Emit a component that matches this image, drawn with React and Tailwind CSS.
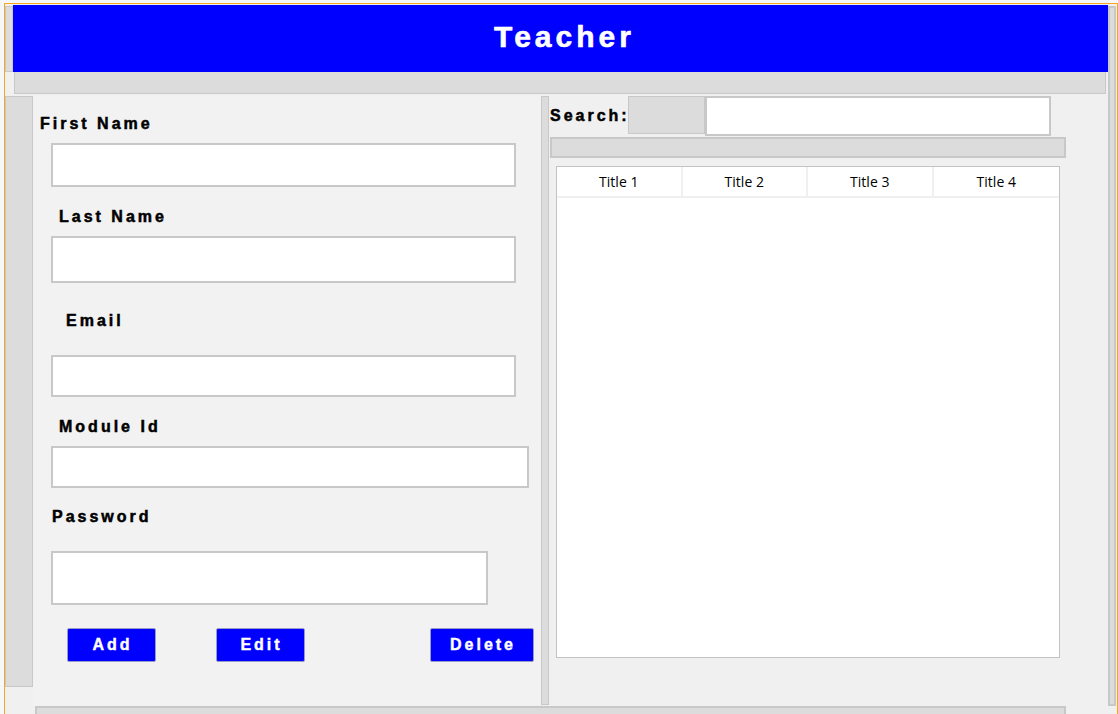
const label = "font-['Liberation_Sans',Arial,sans-serif] text-[16px] font-bold leading-[18px] tracking-[3px] text-black [-webkit-text-stroke:0.5px_black]";
const field = 'border-2 border-[#c8c8c8] bg-white';
const panel = 'border border-[#c8c8c8] bg-[#dcdcdc]';

function FormLabel({ children, className }) {
  return <div className={`${label} ${className}`}>{children}</div>;
}

function ActionButton({ children, className }) {
  return (
    <button
      className={`h-[34px] rounded-[2px] border border-[#9a9ac8] bg-[#0000ff] font-['Liberation_Sans',Arial,sans-serif] text-[16px] font-bold tracking-[3px] text-white [-webkit-text-stroke:0.4px_white] ${className}`}
    >
      {children}
    </button>
  );
}

export default function App() {
  return (
    <div className="h-[714px] w-[1118px] overflow-hidden bg-[#f7f7f7] pl-[4px] pt-[3px]">
      <div className="flex h-[711px] w-[1114px] overflow-hidden border-l border-r border-t border-[#f5a623] bg-[#f0f0f0] pt-[1px]">
        <div className="flex w-[1103px] shrink-0 flex-col">
          {/* header */}
          <div className="flex h-[67px] shrink-0">
            <div className={`mt-[1px] h-[66px] w-[8px] ${panel}`} />
            <div className="flex flex-1 items-center justify-center bg-[#0000ff] pb-[5px] pl-[8px] font-['Liberation_Sans',Arial,sans-serif] text-[30px] font-bold tracking-[4px] text-white [-webkit-text-stroke:0.6px_white]">
              Teacher
            </div>
          </div>
          <div className={`ml-[9px] h-[22px] w-[1092px] shrink-0 border-t-0 ${panel}`} />

          <div className="mt-[2px] flex h-[609px] shrink-0">
            <div className={`h-[591px] w-[28px] ${panel}`} />

            {/* form */}
            <div className="flex w-[508px] flex-col bg-[#f2f2f2]">
              <FormLabel className="ml-[7px] mt-[19px]">First Name</FormLabel>
              <div className={`ml-[18px] mt-[10px] h-[44px] w-[465px] ${field}`} />
              <FormLabel className="ml-[26px] mt-[21px]">Last Name</FormLabel>
              <div className={`ml-[18px] mt-[10px] h-[47px] w-[465px] ${field}`} />
              <FormLabel className="ml-[33px] mt-[29px]">Email</FormLabel>
              <div className={`ml-[18px] mt-[25px] h-[42px] w-[465px] ${field}`} />
              <FormLabel className="ml-[26px] mt-[21px]">Module Id</FormLabel>
              <div className={`ml-[18px] mt-[10px] h-[42px] w-[478px] ${field}`} />
              <FormLabel className="ml-[19px] mt-[20px]">Password</FormLabel>
              <div className={`ml-[18px] mt-[25px] h-[54px] w-[437px] ${field}`} />
              <div className="ml-[34px] mt-[23px] flex">
                <ActionButton className="w-[89px] pl-[2px]">Add</ActionButton>
                <ActionButton className="ml-[60px] w-[89px] pl-[2px]">Edit</ActionButton>
                <ActionButton className="ml-[125px] w-[104px] pl-[2px]">Delete</ActionButton>
              </div>
            </div>

            <div className={`h-[609px] w-[8px] ${panel}`} />

            {/* list */}
            <div className="flex flex-1 flex-col">
              <div className="flex">
                <div className="flex h-[38px] w-[79px] items-center pt-[2px]">
                  <span className={label + ' pl-[1px]'}>Search:</span>
                </div>
                <div className={`h-[38px] w-[77px] ${panel}`} />
                <div className={`h-[40px] w-[346px] ${field}`} />
              </div>
              <div className={`ml-[1px] mt-[1px] h-[21px] w-[516px] border-2 ${panel}`} />
              <div className="ml-[7px] mt-[8px] h-[492px] w-[504px] border border-[#c3c3c3] bg-white">
                <div className="grid h-[31px] grid-cols-4 border-b-2 border-[#f0f0f0] font-['Open_Sans','Noto_Sans',sans-serif] text-[14px] text-black">
                  {['Title 1', 'Title 2', 'Title 3', 'Title 4'].map((t, i) => (
                    <div
                      key={t}
                      className={`flex items-center justify-center ${i < 3 ? 'border-r-2 border-[#f0f0f0]' : ''}`}
                    >
                      {t}
                    </div>
                  ))}
                </div>
              </div>
            </div>
          </div>
          <div className={`ml-[30px] mt-[1px] h-[10px] w-[1031px] shrink-0 border-2 ${panel}`} />
        </div>
        <div className={`mt-[1px] h-[700px] w-[8px] shrink-0 border-2 ${panel}`} />
      </div>
    </div>
  );
}
